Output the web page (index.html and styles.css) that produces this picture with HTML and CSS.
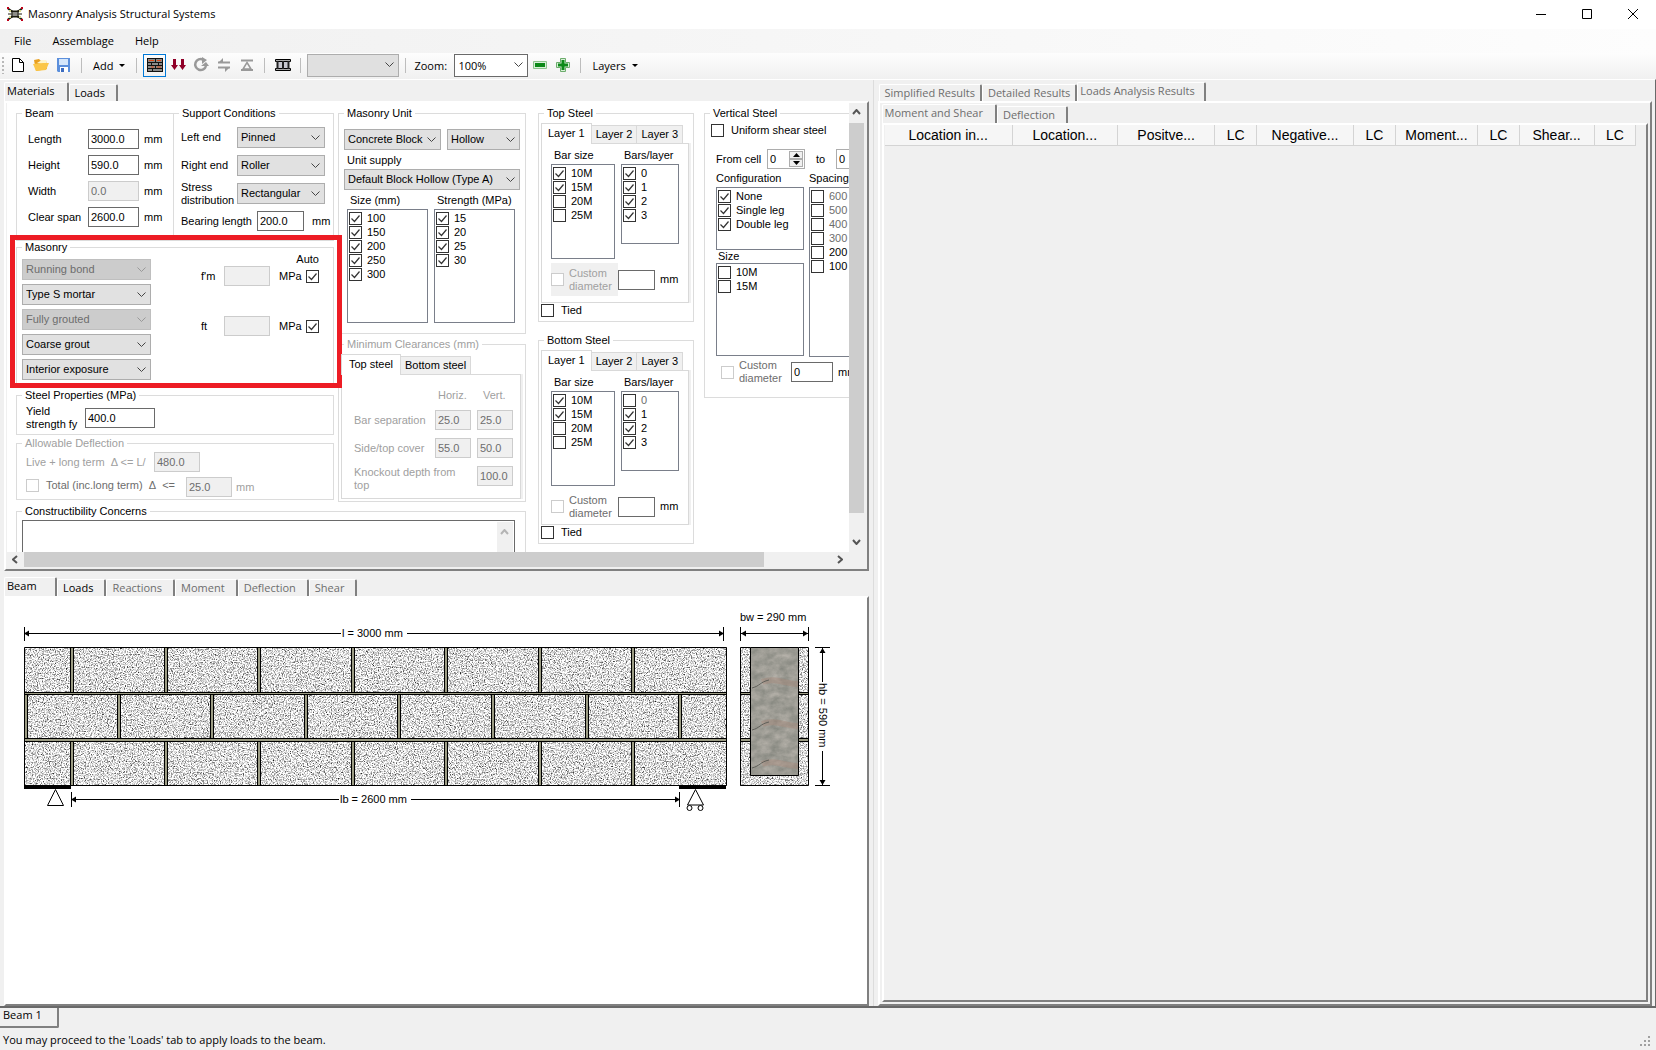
FILE: index.html
```html
<!DOCTYPE html>
<html lang="en">
<head>
<meta charset="utf-8">
<title>Masonry Analysis Structural Systems</title>
<link rel="stylesheet" href="styles.css">
</head>
<body>
<header class="titlebar">
  <svg class="app-icon" width="16" height="14" viewBox="0 0 16 14" aria-hidden="true">
    <path d="M1 1.500l4 3h6l4-3M1 12.500l4-3h6l4 3" fill="none" stroke="#1c1c10" stroke-width="2"/>
    <path d="M5 3v8M11 3v8M1 7h14" fill="none" stroke="#1c1c10"/>
    <path d="M2 3h2v2H2zM12 3h2v2h-2zM2 9h2v2H2zM12 9h2v2h-2z" fill="#d8d890"/>
    <path d="M0 0h2v2H0zM14 0h2v2h-2zM0 12h2v2H0zM14 12h2v2h-2z" fill="#c00018"/>
  </svg>
  <h1>Masonry Analysis Structural Systems</h1>
  <div class="window-buttons">
    <button type="button" aria-label="Minimize"><svg width="12" height="12"><path d="M1 6.500h10" stroke="#000"/></svg></button>
    <button type="button" aria-label="Maximize"><svg width="12" height="12"><path d="M1.500 1.500h9v9h-9z" fill="none" stroke="#000"/></svg></button>
    <button type="button" aria-label="Close"><svg width="12" height="12"><path d="M1 1l10 10M11 1L1 11" stroke="#000"/></svg></button>
  </div>
</header>
<nav class="menubar">
  <button type="button">File</button>
  <button type="button">Assemblage</button>
  <button type="button">Help</button>
</nav>
<div class="toolbar" role="toolbar">
  <span class="grip"></span>
  <button type="button" class="tool" aria-label="New"><svg width="16" height="16"><path d="M2.500 1.500h7l4 4v9h-11z" fill="#fff" stroke="#000"/><path d="M9.500 1.500v4h4" fill="none" stroke="#000"/></svg></button>
  <button type="button" class="tool" aria-label="Open"><svg width="18" height="16"><path d="M2 3l5-1 2 2 5-1 1 9-11 2z" fill="#e8a020"/><path d="M5 6l5-3 4 0 0 5z" fill="#fff4c8"/><path d="M1 7l10-1 6 0-3 7-10 1z" fill="#fbc648"/></svg></button>
  <button type="button" class="tool" aria-label="Save"><svg width="16" height="16"><path d="M1 1h13v14H2l-1-1z" fill="#5b8fdc"/><path d="M3 2h9v6H3z" fill="#d4e6fb"/><path d="M4 10h8v5H4z" fill="#fff"/><path d="M5 11h3v4H5z" fill="#3c6cc0"/></svg></button>
  <span class="sep"></span>
  <button type="button" class="drop">Add</button>
  <span class="sep"></span>
  <button type="button" class="tool tool-on" aria-label="Masonry"><svg width="18" height="16"><path d="M1 1h16v14H1z" fill="#8a8a8a"/><path d="M1 1.500h16M1 5.500h16M1 8.500h16M1 11.500h16M1 14.500h16M9.500 2v3M5.500 6v2M12.500 6v2M9.500 9v2M6.500 12v2M1.500 1v14M16.500 1v14" stroke="#111" fill="none"/><path d="M3 3.500h5M11 3.500h4M5 10h3M11 10h4" stroke="#d84818"/></svg></button>
  <button type="button" class="tool" aria-label="Loads"><svg width="16" height="14"><path d="M3 1h3v6h2l-3.500 5L1 7h2zM11 1h3v6h2l-3.500 5L9 7h2z" fill="#900028"/></svg></button>
  <button type="button" class="tool" aria-label="Rotate"><svg width="16" height="16"><path d="M10 2.500A5.500 5.500 0 1 0 13 9" fill="none" stroke="#999" stroke-width="2.500"/><path d="M9 0l5 3-5 4zM8 9h8l-3-4z" fill="#999"/></svg></button>
  <button type="button" class="tool" aria-label="Swap"><svg width="14" height="14"><path d="M1 4.500h12M1 9.500h12" stroke="#999" stroke-width="2"/><path d="M1 5l5-5v5zM13 9l-5 5V9z" fill="#999"/></svg></button>
  <button type="button" class="tool" aria-label="Supports"><svg width="14" height="14"><path d="M1 2.500h12M1 12h12" stroke="#999" stroke-width="2"/><path d="M7 4.500l4 6.500H3z" fill="none" stroke="#999" stroke-width="1.500"/></svg></button>
  <span class="sep"></span>
  <button type="button" class="tool" aria-label="Columns"><svg width="18" height="14"><path d="M1.500 1.500h15v2h-15zM1.500 10.500h15v2h-15z" fill="#aaa" stroke="#000"/><path d="M3.500 4h11v6h-11z" fill="#c8c8d0"/><path d="M3.500 3v8M9 3v8M14.500 3v8" stroke="#222" fill="none" stroke-width="2"/></svg></button>
  <span class="sep"></span>
  <select class="tool-combo tool-combo-off" aria-label="Load case" disabled><option></option></select>
  <span class="sep"></span>
  <label class="zoom-label" for="zoom">Zoom:</label>
  <select class="tool-combo zoom-combo" id="zoom"><option>100%</option></select>
  <button type="button" class="tool" aria-label="Zoom out"><svg width="16" height="16"><path d="M1.500 4.500h13v7h-13z" fill="#d8f0d8" stroke="#8cc48c"/><path d="M3 6h10v4H3z" fill="#0c8a18"/></svg></button>
  <button type="button" class="tool" aria-label="Zoom in"><svg width="16" height="16"><path d="M5.500 1.500h5v4h4v5h-4v4h-5v-4h-4v-5h4z" fill="#d8f0d8" stroke="#6cac6c"/><path d="M6.500 3h3v3.500H13v3H9.500V13h-3V9.500H3v-3h3.500z" fill="#0c8a18"/></svg></button>
  <span class="sep"></span>
  <button type="button" class="drop">Layers</button>
</div>

<main class="workspace">
  <section class="left">
    <div class="pane">
      <div class="tabs" role="tablist">
        <button type="button" role="tab" class="tab active">Materials</button>
        <button type="button" role="tab" class="tab">Loads</button>
      </div>
      <div class="page">
        <div class="viewport">
          <div class="form">
            <div class="form-left">
              <div class="col-a">
                <div class="pair">
                  <fieldset class="beam">
                    <legend>Beam</legend>
                    <div class="beam-grid">
                      <label for="len">Length</label><input id="len" value="3000.0"><span>mm</span>
                      <label for="hei">Height</label><input id="hei" value="590.0"><span>mm</span>
                      <label for="wid">Width</label><input id="wid" value="0.0" disabled><span>mm</span>
                      <label for="span">Clear span</label><input id="span" value="2600.0"><span>mm</span>
                    </div>
                  </fieldset>
                  <fieldset class="support">
                    <legend>Support Conditions</legend>
                    <div class="support-grid">
                      <label for="lend">Left end</label><select id="lend"><option>Pinned</option></select>
                      <label for="rend">Right end</label><select id="rend"><option>Roller</option></select>
                      <label for="stress">Stress distribution</label><select id="stress"><option>Rectangular</option></select>
                    </div>
                    <div class="bearing"><label for="bear">Bearing length</label><input id="bear" value="200.0"><span>mm</span></div>
                  </fieldset>
                </div>
                <fieldset class="masonry">
                  <legend>Masonry</legend>
                  <div class="masonry-selects">
                    <select aria-label="Bond" disabled><option>Running bond</option></select>
                    <select aria-label="Mortar"><option>Type S mortar</option></select>
                    <select aria-label="Grouting" disabled><option>Fully grouted</option></select>
                    <select aria-label="Grout"><option>Coarse grout</option></select>
                    <select aria-label="Exposure"><option>Interior exposure</option></select>
                  </div>
                  <div class="strengths">
                    <span class="auto">Auto</span>
                    <label for="fm">f'm</label><input id="fm" disabled><span>MPa</span><input type="checkbox" aria-label="Auto f'm" checked>
                    <label for="ft">ft</label><input id="ft" disabled><span>MPa</span><input type="checkbox" aria-label="Auto ft" checked>
                  </div>
                </fieldset>
                <fieldset class="steel-props">
                  <legend>Steel Properties (MPa)</legend>
                  <label for="fy">Yield<br>strength fy</label><input id="fy" value="400.0">
                </fieldset>
                <fieldset class="deflect">
                  <legend>Allowable Deflection</legend>
                  <div class="row live"><label for="live">Live + long term&nbsp; Δ &lt;= L/</label><input id="live" value="480.0" disabled></div>
                  <div class="row total"><label class="check"><input type="checkbox" disabled>Total (inc.long term)&nbsp; Δ&nbsp; &lt;=</label><input aria-label="Total deflection" value="25.0" disabled><span>mm</span></div>
                </fieldset>
                <div class="highlight"></div>
              </div>

              <div class="col-b">
                <fieldset class="unit">
                  <legend>Masonry Unit</legend>
                  <div class="unit-row"><select aria-label="Unit material"><option>Concrete Block</option></select><select aria-label="Unit type"><option>Hollow</option></select></div>
                  <label class="supply" for="supply">Unit supply</label>
                  <select id="supply"><option>Default Block Hollow (Type A)</option></select>
                  <div class="unit-lists">
                    <div><h3>Size (mm)</h3>
                      <div class="list">
                        <label><input type="checkbox" checked>100</label><label><input type="checkbox" checked>150</label><label><input type="checkbox" checked>200</label><label><input type="checkbox" checked>250</label><label><input type="checkbox" checked>300</label>
                      </div></div>
                    <div><h3>Strength (MPa)</h3>
                      <div class="list">
                        <label><input type="checkbox" checked>15</label><label><input type="checkbox" checked>20</label><label><input type="checkbox" checked>25</label><label><input type="checkbox" checked>30</label>
                      </div></div>
                  </div>
                </fieldset>
                <fieldset class="clear">
                  <legend class="faint">Minimum Clearances (mm)</legend>
                  <div class="gtabs"><button type="button" class="gtab on">Top steel</button><button type="button" class="gtab">Bottom steel</button></div>
                  <div class="gpage clear-grid faint">
                    <span></span><span class="mid">Horiz.</span><span class="mid">Vert.</span>
                    <span>Bar separation</span><input aria-label="Horizontal bar separation" value="25.0" disabled><input aria-label="Vertical bar separation" value="25.0" disabled>
                    <span>Side/top cover</span><input aria-label="Side cover" value="55.0" disabled><input aria-label="Top cover" value="50.0" disabled>
                    <label class="knock" for="knock">Knockout depth from top</label><input id="knock" value="100.0" disabled>
                  </div>
                </fieldset>
              </div>

              <fieldset class="concerns">
                <legend>Constructibility Concerns</legend>
                <div class="memo"><textarea aria-label="Constructibility Concerns" readonly></textarea><span class="memo-bar"><svg width="9" height="6"><path d="M1 5l3.500-4L8 5" fill="none" stroke="#b4b4b4" stroke-width="2"/></svg></span></div>
              </fieldset>
            </div>

            <div class="col-c">
              <fieldset class="steel">
                <legend>Top Steel</legend>
                <div class="gtabs"><button type="button" class="gtab on">Layer 1</button><button type="button" class="gtab">Layer 2</button><button type="button" class="gtab">Layer 3</button></div>
                <div class="gpage">
                  <div class="bars">
                    <div><h3>Bar size</h3><div class="list tall">
                      <label><input type="checkbox" checked>10M</label><label><input type="checkbox" checked>15M</label><label><input type="checkbox">20M</label><label><input type="checkbox">25M</label></div></div>
                    <div><h3>Bars/layer</h3><div class="list short">
                      <label><input type="checkbox" checked>0</label><label><input type="checkbox" checked>1</label><label><input type="checkbox" checked>2</label><label><input type="checkbox" checked>3</label></div></div>
                  </div>
                  <div class="custom"><label class="shade faint"><input type="checkbox" disabled><span>Custom diameter</span></label><input aria-label="Top custom diameter"><span>mm</span></div>
                </div>
                <label class="check tied"><input type="checkbox">Tied</label>
              </fieldset>
              <fieldset class="steel steel-low">
                <legend>Bottom Steel</legend>
                <div class="gtabs"><button type="button" class="gtab on">Layer 1</button><button type="button" class="gtab">Layer 2</button><button type="button" class="gtab">Layer 3</button></div>
                <div class="gpage">
                  <div class="bars">
                    <div><h3>Bar size</h3><div class="list tall">
                      <label><input type="checkbox" checked>10M</label><label><input type="checkbox" checked>15M</label><label><input type="checkbox">20M</label><label><input type="checkbox">25M</label></div></div>
                    <div><h3>Bars/layer</h3><div class="list short">
                      <label class="dim"><input type="checkbox">0</label><label><input type="checkbox" checked>1</label><label><input type="checkbox" checked>2</label><label><input type="checkbox" checked>3</label></div></div>
                  </div>
                  <div class="custom"><label class="dim"><input type="checkbox" disabled><span>Custom diameter</span></label><input aria-label="Bottom custom diameter"><span>mm</span></div>
                </div>
                <label class="check tied"><input type="checkbox">Tied</label>
              </fieldset>
            </div>

            <fieldset class="vertical">
              <legend>Vertical Steel</legend>
              <label class="check"><input type="checkbox">Uniform shear steel</label>
              <div class="cells"><label for="from">From cell</label>
                <span class="spin"><input id="from" value="0"><span class="spin-buttons"><button type="button" aria-label="Increase"><svg width="7" height="4"><path d="M0 4l3.500-4L7 4z"/></svg></button><button type="button" aria-label="Decrease"><svg width="7" height="4"><path d="M0 0l3.500 4L7 0z"/></svg></button></span></span>
                <label for="to">to</label><span class="spin"><input id="to" value="0"></span></div>
              <div class="shear">
                <div>
                  <h3>Configuration</h3>
                  <div class="list conf"><label><input type="checkbox" checked>None</label><label><input type="checkbox" checked>Single leg</label><label><input type="checkbox" checked>Double leg</label></div>
                  <h3 class="size-head">Size</h3>
                  <div class="list size"><label><input type="checkbox">10M</label><label><input type="checkbox">15M</label></div>
                </div>
                <div>
                  <h3>Spacing</h3>
                  <div class="list spacing"><label class="dim"><input type="checkbox">600</label><label class="dim"><input type="checkbox">500</label><label class="dim"><input type="checkbox">400</label><label class="dim"><input type="checkbox">300</label><label><input type="checkbox">200</label><label><input type="checkbox">100</label></div>
                </div>
              </div>
              <div class="custom"><label class="dim"><input type="checkbox" disabled><span>Custom diameter</span></label><input aria-label="Shear custom diameter" value="0"><span>mm</span></div>
            </fieldset>
          </div>
        </div>
        <div class="vbar"><svg width="9" height="6"><path d="M1 5l3.500-4L8 5" fill="none" stroke="#555" stroke-width="2"/></svg><span class="thumb"></span><svg width="9" height="6"><path d="M1 1l3.500 4L8 1" fill="none" stroke="#555" stroke-width="2"/></svg></div>
        <div class="hbar"><svg width="6" height="9"><path d="M5 1L1 4.500 5 8" fill="none" stroke="#555" stroke-width="2"/></svg><span class="thumb"></span><svg width="6" height="9"><path d="M1 1l4 3.500L1 8" fill="none" stroke="#555" stroke-width="2"/></svg></div>
      </div>
    </div>

    <div class="pane">
      <div class="tabs" role="tablist">
        <button type="button" role="tab" class="tab active">Beam</button>
        <button type="button" role="tab" class="tab">Loads</button>
        <button type="button" role="tab" class="tab dim">Reactions</button>
        <button type="button" role="tab" class="tab dim">Moment</button>
        <button type="button" role="tab" class="tab dim">Deflection</button>
        <button type="button" role="tab" class="tab dim">Shear</button>
      </div>
      <div class="page canvas">
        <svg width="840" height="230" viewBox="7 598 840 230" role="img" aria-label="Beam elevation and cross section">
          <defs>
            <filter id="grain" x="0" y="0" width="1" height="1" color-interpolation-filters="sRGB">
              <feTurbulence type="fractalNoise" baseFrequency="0.83" numOctaves="3" seed="4"/>
              <feColorMatrix values="1.300 1.300 0 0 -0.430  1.300 1.300 0 0 -0.430  1.300 1.300 0 0 -0.430  0 0 0 0 1"/>
            </filter>
            <filter id="grout" x="0" y="0" width="1" height="1" color-interpolation-filters="sRGB">
              <feTurbulence type="fractalNoise" baseFrequency="0.1 0.15" numOctaves="4" seed="9"/>
              <feColorMatrix values="0.250 0 0 0 0.490  0.220 0 0 0 0.500  0.220 0 0 0 0.470  0 0 0 0 1"/>
            </filter>
            <path id="left-head" d="M0 0l5-3v6z"/>
            <path id="right-head" d="M0 0l-5-3v6z"/>
            <path id="joint" d="M-1.500 0v44M1.500 0v44" stroke="#000"/>
            <path id="joint-fill" d="M0 0v45" stroke="#9c9c84" stroke-width="2"/>
            <g id="head-joint"><use href="#joint-fill"/><use href="#joint"/></g>
          </defs>
          <rect x="24" y="647" width="703" height="139" filter="url(#grain)"/>
          <g>
            <use href="#head-joint" x="72" y="648"/><use href="#head-joint" x="166" y="648"/><use href="#head-joint" x="259" y="648"/><use href="#head-joint" x="353" y="648"/><use href="#head-joint" x="446" y="648"/><use href="#head-joint" x="540" y="648"/><use href="#head-joint" x="633" y="648"/>
            <use href="#head-joint" x="26" y="694"/><use href="#head-joint" x="119" y="694"/><use href="#head-joint" x="212" y="694"/><use href="#head-joint" x="306" y="694"/><use href="#head-joint" x="399" y="694"/><use href="#head-joint" x="493" y="694"/><use href="#head-joint" x="587" y="694"/><use href="#head-joint" x="680" y="694"/>
            <use href="#head-joint" x="72" y="741"/><use href="#head-joint" x="166" y="741"/><use href="#head-joint" x="259" y="741"/><use href="#head-joint" x="353" y="741"/><use href="#head-joint" x="446" y="741"/><use href="#head-joint" x="540" y="741"/><use href="#head-joint" x="633" y="741"/>
          </g>
          <path d="M25 693.500h701M25 740h701" stroke="#9c9c84" stroke-width="2"/>
          <path d="M24.500 647.500h702v138h-702zM24 692.500h703M24 694.500h703M24 738.500h703M24 741.500h703" fill="none" stroke="#000"/>
          <path d="M24 785h47v4H24zM679 785h47v4h-47z"/>
          <path d="M55.500 789.500l-8 16h16zM695.500 789.500l-8 15.500h16z" fill="#fff" stroke="#000"/>
          <circle cx="689.500" cy="808" r="2.500" fill="#fff" stroke="#000"/><circle cx="700.500" cy="808" r="2.500" fill="#fff" stroke="#000"/>

          <path d="M24.500 627v14M24 633.500h317M407 633.500h317M723.500 627v14M71.500 792v15M71 799.500h268M411 799.500h268M679.500 792v15" stroke="#000"/>
          <use href="#left-head" x="24" y="633.500"/><use href="#right-head" x="724" y="633.500"/>
          <use href="#left-head" x="71" y="799.500"/><use href="#right-head" x="680" y="799.500"/>
          <text x="342" y="637">l = 3000 mm</text>
          <text x="340" y="803">lb = 2600 mm</text>

          <rect x="740" y="647" width="69" height="139" filter="url(#grain)"/>
          <path d="M741 693.500h67M741 740h67" stroke="#9c9c84" stroke-width="2"/>
          <path d="M740.500 647.500h68v138h-68zM740 692.500h68M740 694.500h68M740 738.500h68M740 741.500h68" fill="none" stroke="#000"/>
          <rect x="750" y="647" width="49" height="129" filter="url(#grout)"/>
          <g fill="none" stroke="#a88878" stroke-width="6" opacity="0.400"><path d="M762 682c12-5 24 2 36 2M762 724c12-5 24 2 36 2M762 764c12-5 24 2 36 2"/></g>
          <g fill="none" stroke="#60605a"><path d="M752 688c8-2 8-6 17-8M752 730c8-2 8-6 17-8M752 768c8-2 8-6 17-8"/></g>
          <path d="M750.500 647.500h48v128h-48z" fill="none" stroke="#000"/>
          <path d="M740.500 627v14M740 633.500h69M808.500 627v14M815 647.500h15M822.500 648v34M822.500 751v34M815 785.500h15" stroke="#000"/>
          <use href="#left-head" x="741" y="633.500"/><use href="#right-head" x="808" y="633.500"/>
          <path d="M822.500 648l-3 5h6zM822.500 785l-3-5h6z"/>
          <text x="740" y="621">bw = 290 mm</text>
          <text transform="translate(819 683) rotate(90)">hb = 590 mm</text>
        </svg>
      </div>
    </div>
  </section>

  <section class="right pane">
    <div class="tabs tight" role="tablist">
      <button type="button" role="tab" class="tab dim">Simplified Results</button>
      <button type="button" role="tab" class="tab dim">Detailed Results</button>
      <button type="button" role="tab" class="tab dim active">Loads Analysis Results</button>
    </div>
    <div class="page results">
      <div class="tabs" role="tablist">
        <button type="button" role="tab" class="tab dim active">Moment and Shear</button>
        <button type="button" role="tab" class="tab dim">Deflection</button>
      </div>
      <div class="page grid-page">
        <table>
          <colgroup><col class="w127"><col class="w104"><col class="w100"><col class="w40"><col class="w100"><col class="w40"><col class="w86"><col class="w40"><col class="w74"><col class="w40"></colgroup>
          <thead><tr><th>Location in...</th><th>Location...</th><th>Positve...</th><th>LC</th><th>Negative...</th><th>LC</th><th>Moment...</th><th>LC</th><th>Shear...</th><th>LC</th></tr></thead>
        </table>
      </div>
    </div>
  </section>
</main>
<div class="doc-tabs"><button type="button" class="doc-tab">Beam 1</button></div>
<footer class="status"><span>You may proceed to the 'Loads' tab to apply loads to the beam.</span>
  <svg width="12" height="12" aria-hidden="true"><path d="M8 0h2v2H8zM4 4h2v2H4zM8 4h2v2H8zM0 8h2v2H0zM4 8h2v2H4zM8 8h2v2H8z" fill="#a0a0a0"/></svg></footer>
</body>
</html>
```
FILE: styles.css
```css
* { box-sizing: border-box; }

body {
  margin: 0;
  height: 100vh;
  display: flex;
  flex-direction: column;
  overflow: hidden;
  background: #f0f0f0;
  color: #000;
  font: 11px/13px "Liberation Sans", Arial, sans-serif;
}

button, input, select, textarea { font: inherit; color: inherit; margin: 0; border-radius: 0; }
button { border: 0; padding: 0; background: none; }
h1, h3 { margin: 0; font-size: inherit; font-weight: normal; }
svg { display: block; flex: none; }
svg text { font: 11px "Liberation Sans", Arial, sans-serif; }

/* Window chrome */
.titlebar, .menubar, .toolbar, .tab, .doc-tab, .status {
  font-family: "Open Sans", "Noto Sans", sans-serif;
}
.titlebar { flex: none; height: 29px; display: flex; align-items: center; padding: 0 0 2px 7px; gap: 5px; background: #fff; }
.titlebar h1 { flex: 1; }
.window-buttons { display: flex; height: 26px; }
.window-buttons button { width: 46px; display: grid; place-items: center; }
.menubar { flex: none; height: 24px; display: flex; padding: 0 0 1px 8px; background: linear-gradient(90deg, #f0f0f0, #fdfdfd); }
.menubar button { padding: 0 6px; margin-right: 9px; }
.toolbar { flex: none; height: 26px; display: flex; align-items: center; padding-bottom: 2px; background: linear-gradient(#fdfdfd, #f0f0f0); }
.grip { width: 2px; height: 17px; margin: 0 2px; background: repeating-linear-gradient(#b8b8b8 0 2px, transparent 2px 4px); }
.tool { width: 23px; height: 23px; display: grid; place-items: center; }
.tool-on { border: 1px solid #0078d7; }
.sep { width: 1px; height: 15px; margin: 0 6px; background: #bdbdbd; }
.drop { display: flex; align-items: center; gap: 6px; padding: 0 5px; }
.drop::after { content: ""; border: 3px solid transparent; border-top-color: #000; border-bottom: 0; }
.tool-combo { width: 92px; height: 23px; padding: 0 3px; }
.tool-combo.zoom-combo { width: 74px; background-color: #fff; border-color: #6a6a6a; }
.tool-combo.tool-combo-off { background-color: #e0e0e0; border-color: #adadad; }
.zoom-label { width: 42px; padding-left: 2px; }

/* Main split */
.workspace {
  flex: 1;
  min-height: 0;
  display: grid;
  grid-template-columns: minmax(0, 873fr) minmax(0, 781fr);
  grid-template-rows: minmax(0, 1fr);
  border-top: 1px solid #fff;
  border-right: 1px solid #696969;
  border-bottom: 2px solid #696969;
}
.left { display: grid; grid-template-rows: minmax(0, 491fr) minmax(0, 435fr); padding: 0 4px 0 4px; border-right: 1px solid #dcdcdc; }
.pane { display: flex; flex-direction: column; min-width: 0; min-height: 0; padding: 2px 0 0; }
.left .pane + .pane { padding-top: 6px; }
.right { padding-left: 4px; padding-right: 3px; }

.tabs { flex: none; display: flex; align-items: flex-end; height: 19px; }
.tab {
  height: 17px;
  padding: 0 11px 0 5px;
  line-height: 16px;
  border: 1px solid #fff;
  border-right: 2px solid #808080;
  border-bottom: 0;
  border-radius: 2px 2px 0 0;
  white-space: nowrap;
}
.tab.active { height: 19px; min-width: 53px; padding: 0 12px 3px 2px; text-align: left; }
.tight { padding-left: 1px; }
.tight .tab { padding-right: 5px; }
.tight .tab.active { padding-right: 9px; }
.dim { color: #6d6d6d; }
.faint { color: #a0a0a0; }
.page {
  flex: 1;
  min-height: 0;
  border: 2px solid #fff;
  border-right-color: #808080;
  border-bottom-color: #808080;
  display: grid;
  grid-template-columns: minmax(0, 1fr) 15px;
  grid-template-rows: minmax(0, 1fr) 15px;
  padding: 0 3px 2px 1px;
}
.canvas { display: block; background: #fff; padding: 0 0 0 1px; }
.results, .grid-page { display: flex; flex-direction: column; padding: 1px 2px 2px; }
.grid-page { padding: 0 10px 0 1px; }

/* Scroll bars */
.vbar, .hbar { display: flex; align-items: center; background: #f0f0f0; }
.vbar { flex-direction: column; padding: 6px 0 7px; }
.vbar .thumb { flex: 1; width: 15px; margin: 8px 0 26px; background: #cdcdcd; }
.hbar { padding: 0 6px 0 5px; }
.hbar .thumb { flex: 1; height: 15px; margin: 0 73px 0 6px; background: #cdcdcd; }

/* Form */
.viewport { overflow: hidden; background: #fff; }
.form { display: flex; align-items: flex-start; width: max-content; padding: 4px 0 0 9px; }
.form-left { display: grid; grid-template-columns: 318px 188px; gap: 3px 4px; margin-right: 12px; }
.col-a { position: relative; }
.col-c { width: 156px; margin-right: 10px; }
.pair { display: flex; height: 134px; }

/* --pad is the group's left inset; the caption always starts 6px from the frame */
fieldset { --pad: 0px; margin: 0; min-width: 0; padding: 0 0 0 var(--pad); border: 1px solid #dcdcdc; }
legend { margin-left: calc(5px - var(--pad)); padding: 0 3px; height: 13px; white-space: nowrap; }

input:not([type="checkbox"]) { width: 100%; height: 20px; padding: 0 2px 1px; background: #fff; border: 1px solid #6a6a6a; outline: 0; }
input:not([type="checkbox"]):disabled { background: #f0f0f0; border-color: #ccc; color: #6d6d6d; }
select {
  appearance: none;
  height: 21px;
  width: 100%;
  padding: 0 3px;
  border: 1px solid #adadad;
  background: #e1e1e1 url("data:image/svg+xml,%3Csvg xmlns='http://www.w3.org/2000/svg' width='9' height='6'%3E%3Cpath d='M.5.5l4 4 4-4' fill='none' stroke='%23444'/%3E%3C/svg%3E") no-repeat right 4px center;
}
select:disabled { background-color: #ccc; border-color: #bfbfbf; color: #6d6d6d; opacity: 1; }
.masonry select:disabled { background-image: url("data:image/svg+xml,%3Csvg xmlns='http://www.w3.org/2000/svg' width='9' height='6'%3E%3Cpath d='M.5.5l4 4 4-4' fill='none' stroke='%23999'/%3E%3C/svg%3E"); }
input[type="checkbox"] { appearance: none; flex: none; width: 13px; height: 13px; border: 1px solid #333; background: #fff; }
input[type="checkbox"]:disabled { border-color: #ccc; }
input[type="checkbox"]:checked { background: url("data:image/svg+xml,%3Csvg xmlns='http://www.w3.org/2000/svg' width='11' height='11'%3E%3Cpath d='M1.500 5.500l3 3 5-6' fill='none' stroke='%23333' stroke-width='1.200'/%3E%3C/svg%3E"); }
.check { display: flex; align-items: center; gap: 7px; }

.beam { --pad: 11px; width: 157px; padding-top: 9px; border-right: 0; }
.beam-grid { display: grid; grid-template-columns: 60px 51px auto; row-gap: 6px; align-items: center; }
.beam-grid span { padding-left: 5px; }
.support { --pad: 7px; width: 161px; padding-top: 7px; }
.support-grid { display: grid; grid-template-columns: 56px 88px; row-gap: 7px; align-items: center; }
.support-grid label { height: 21px; display: flex; align-items: center; }
.bearing { display: grid; grid-template-columns: 76px 47px auto; align-items: center; margin-top: 7px; }
.bearing span { padding-left: 8px; }

.masonry { --pad: 5px; display: flex; padding-bottom: 5px; }
.masonry-selects { width: 129px; display: grid; row-gap: 4px; padding-top: 5px; }
.strengths { display: grid; grid-template-columns: 23px 46px 36px 13px; grid-template-rows: 12px 20px 20px; align-content: start; align-items: center; margin-left: 50px; }
.strengths .auto { grid-column: 1 / -1; justify-self: end; padding-bottom: 2px; }
.strengths > :nth-child(n + 6) { margin-top: 60px; }
.strengths span:not(.auto) { padding-left: 9px; }

.steel-props { --pad: 9px; display: flex; align-items: center; padding-top: 3px; padding-bottom: 3px; margin-top: 3px; }
.steel-props label { width: 59px; }
.steel-props input:not([type="checkbox"]) { width: 70px; }

.deflect { --pad: 9px; padding-top: 2px; padding-bottom: 2px; margin-top: 2px; color: #a0a0a0; }
.row { display: flex; align-items: center; }
.row + .row { margin-top: 5px; }
.row input:not([type="checkbox"]) { width: 46px; }
.live label { width: 128px; }
.total label { width: 160px; padding-bottom: 4px; color: #6d6d6d; }
.total span { padding-left: 4px; }

/* Call-out frame over the masonry group */
.highlight { position: absolute; left: -6px; top: 128px; width: 332px; height: 153px; border: 5px solid #ed1c24; pointer-events: none; }

.unit { --pad: 5px; padding: 9px 5px 10px; }
.unit-row { display: grid; grid-template-columns: 97px 73px; gap: 6px; }
.supply { display: block; margin: 4px 3px 2px; }
.unit-lists { display: grid; grid-template-columns: 81px 81px; gap: 6px; padding: 4px 3px 0; }
h3 { padding: 0 3px 2px; height: 15px; white-space: nowrap; }
.list { border: 1px solid #7a7f8a; background: #fff; padding: 1px; overflow: hidden; }
.list label { display: flex; align-items: center; gap: 5px; height: 14px; }
.unit-lists .list { height: 114px; }

.clear { --pad: 2px; margin-top: 4px; padding-top: 3px; padding-right: 4px; padding-bottom: 2px; }
.gtabs { display: flex; align-items: flex-end; height: 20px; }
.gtab { height: 18px; padding: 0 4px; background: #f0f0f0; border: 1px solid #d9d9d9; border-bottom: 0; border-left: 0; }
.gtab.on { height: 21px; margin-bottom: -1px; padding: 0 7px 2px; background: #fff; border-left: 1px solid #d9d9d9; position: relative; }
.gpage { border: 1px solid #d9d9d9; background: #fff; box-shadow: 2px 0 #f0f0f0; }
.clear-grid { display: grid; grid-template-columns: 81px 36px 36px; grid-template-rows: 14px 20px 20px 26px; row-gap: 8px; column-gap: 0; align-items: center; padding: 13px 0 6px 12px; }
.clear-grid input:nth-of-type(even), .clear-grid .knock + input { margin-left: 6px; }
.clear-grid .mid { padding-left: 3px; white-space: nowrap; }
.clear-grid .mid + .mid { padding-left: 12px; }
.clear-grid .knock { grid-column: span 2; padding-right: 8px; }
.clear-grid .knock + input { align-self: start; }
.clear-grid input:not([type="checkbox"]) { width: 36px; }

.concerns { --pad: 5px; grid-column: 1 / -1; padding-top: 2px; padding-right: 10px; padding-bottom: 10px; }
.memo { display: flex; height: 60px; border: 1px solid #6a6a6a; }
.memo textarea { flex: 1; border: 0; padding: 2px; resize: none; outline: 0; }
.memo-bar { width: 16px; margin: 1px; padding: 7px 3px; background: #f0f0f0; }

.steel { --pad: 2px; padding-top: 3px; padding-right: 4px; padding-bottom: 4px; }
.steel .gtab { padding: 0 4px; }
.steel .gtab.on { padding: 0 6px 2px; }
.steel + .steel { margin-top: 12px; }
.steel .gpage { padding: 5px 0 6px 9px; }
.steel-low .gpage { padding-bottom: 1px; }
.bars { display: grid; grid-template-columns: 64px 58px; column-gap: 6px; }
.tall { height: 95px; }
.short { height: 80px; }
.custom { display: flex; align-items: center; }
.custom label { width: 67px; display: flex; align-items: center; gap: 5px; }
.custom > span { padding-left: 5px; }
.custom input:not([type="checkbox"]) { width: 37px; }
.steel .custom { margin-top: 4px; }
.steel .custom label { height: 33px; }
.shade { background: #f0f0f0; }
.tied { margin-top: 1px; }

.vertical { --pad: 6px; width: 200px; padding-top: 4px; padding-bottom: 12px; }
.cells { display: grid; grid-template-columns: 51px 38px 31px 38px; align-items: center; margin-top: 12px; padding-left: 5px; }
.cells label:nth-of-type(2) { padding-left: 11px; }
.spin { display: flex; height: 20px; border: 1px solid #adadad; background: #fff; }
.spin input:not([type="checkbox"]) { width: 20px; height: 18px; border: 0; }
.spin-buttons { display: grid; grid-template-rows: 8px 8px; width: 14px; margin: 1px; }
.spin-buttons button { display: grid; place-items: center; background: #f0f0f0; border: 1px solid #adadad; }
.shear { display: grid; grid-template-columns: 88px 88px; column-gap: 5px; padding: 3px 0 0 5px; }
.shear h3 { padding: 0; }
.shear .size-head { height: 13px; padding-left: 2px; }
.conf { height: 63px; }
.size { height: 93px; }
.spacing { height: 170px; }
.vertical .custom { margin: 2px 0 0 10px; }
.vertical .custom label { width: 70px; }
.vertical .custom input:not([type="checkbox"]) { width: 42px; }

/* Results table */
table { width: 100%; table-layout: fixed; border-collapse: collapse; background: #f6f6f6; }
th { height: 20px; padding: 0; border-right: 1px solid #d4d4d4; border-bottom: 1px solid #d4d4d4; font-size: 14px; line-height: 16px; font-weight: normal; white-space: nowrap; }
.w127 { width: 17%; }
.w104 { width: 14%; }
.w100 { width: 13%; }
.w86 { width: 11%; }
.w74 { width: 10%; }

/* Bottom */
.doc-tabs { flex: none; height: 20px; display: flex; }
.doc-tab { width: 59px; padding: 0 0 5px 3px; text-align: left; border-right: 2px solid #808080; border-bottom: 2px solid #808080; border-radius: 0 0 2px 0; }
.status { flex: none; height: 22px; display: flex; align-items: center; justify-content: space-between; padding: 1px 4px 0 3px; }
.status svg { align-self: flex-end; margin-bottom: 2px; }
```
